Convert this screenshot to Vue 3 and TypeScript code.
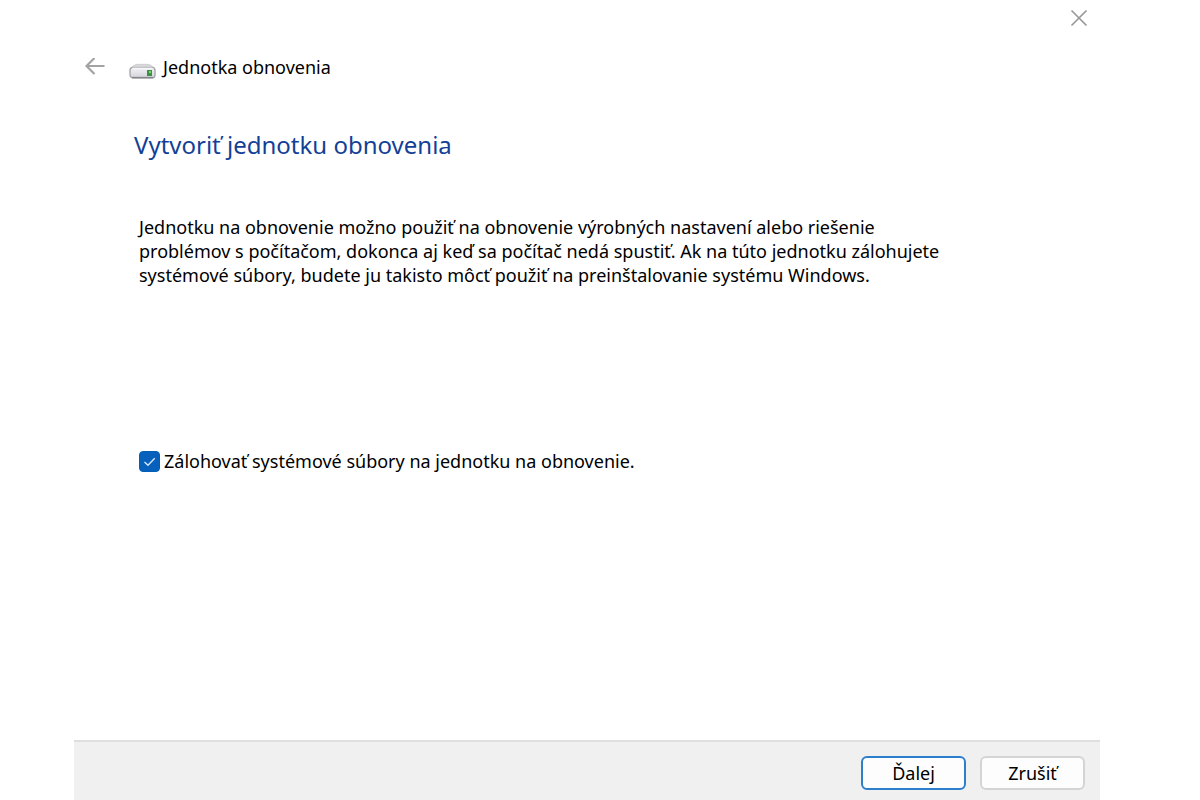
<script setup lang="ts">
import { ref } from 'vue'

const backupSystemFiles = ref<boolean>(true)

const paragraph: string[] = [
  'Jednotku na obnovenie možno použiť na obnovenie výrobných nastavení alebo riešenie',
  'problémov s počítačom, dokonca aj keď sa počítač nedá spustiť. Ak na túto jednotku zálohujete',
  'systémové súbory, budete ju takisto môcť použiť na preinštalovanie systému Windows.',
]
</script>

<template>
  <div class="wizard">
    <div class="titlebar">
      <button class="icon-button" type="button" aria-label="Zavrieť">
        <svg width="18" height="18" viewBox="0 0 18 18" fill="none" stroke="#999" stroke-width="1.7">
          <path d="M1.5 1.5 16.5 16.5M16.5 1.5 1.5 16.5" />
        </svg>
      </button>
    </div>

    <header class="header">
      <button class="icon-button" type="button" aria-label="Späť">
        <svg width="20" height="18" viewBox="0 0 20 18" fill="none" stroke="#a3a3a3" stroke-width="2.2">
          <path d="M19.5 8H1.5M9.5 0 1.5 8l8 8" />
        </svg>
      </button>
      <svg class="drive" width="27" height="16" viewBox="0 0 27 16" aria-hidden="true">
        <defs>
          <linearGradient id="drive-top" x1="0" y1="0" x2="0" y2="1">
            <stop offset="0" stop-color="#cfcfd2" />
            <stop offset="1" stop-color="#f3f3f5" />
          </linearGradient>
          <linearGradient id="drive-front" x1="0" y1="0" x2="0" y2="1">
            <stop offset="0" stop-color="#f4f4f7" />
            <stop offset="1" stop-color="#d2d2d9" />
          </linearGradient>
        </defs>
        <path d="M2 5.5Q4 1.8 8 1.3h11q4 .3 6 4.2z" fill="url(#drive-top)" stroke="#cdcdd0" stroke-width=".8" />
        <rect x="1" y="4.3" width="25" height="10.6" rx="3" fill="url(#drive-front)" stroke="#a2a2a7" stroke-width="1.3" />
        <path d="M3 14.6h21" stroke="#85858a" stroke-width="1.5" />
        <path d="M3.5 5.4h20" stroke="#f8f8fa" stroke-width="1.6" />
        <rect x="18" y="7" width="5" height="6" fill="#399342" />
        <rect x="20" y="8" width="2" height="2" fill="#80d46c" />
      </svg>
      <span class="app-name">Jednotka obnovenia</span>
    </header>

    <main class="content">
      <h1 class="title">Vytvoriť jednotku obnovenia</h1>
      <p class="description">
        <template v-for="(line, i) in paragraph" :key="i">{{ line }}<br v-if="i < paragraph.length - 1" /></template>
      </p>
      <label class="option">
        <span class="box">
          <input v-model="backupSystemFiles" class="check" type="checkbox" />
          <svg v-if="backupSystemFiles" class="tick" width="21" height="21" viewBox="0 0 21 21" fill="none" stroke="#d5e6f8" stroke-width="1.4">
            <path d="M5.5 11 9 14.3l6.7-7" />
          </svg>
        </span>
        <span>Zálohovať systémové súbory na jednotku na obnovenie.</span>
      </label>
    </main>

    <footer class="footer">
      <button class="button primary" type="button">Ďalej</button>
      <button class="button" type="button">Zrušiť</button>
    </footer>
  </div>
</template>

<style>
body {
  background: #fff;
}
</style>

<style scoped>
.wizard {
  box-sizing: border-box;
  display: flex;
  flex-direction: column;
  min-height: 100vh;
  margin: 0 100px 0 74px;
  background: #fff;
  color: #000;
  font-family: "Noto Sans", "Open Sans", sans-serif;
  font-size: 18px;
  line-height: 24px;
}

.titlebar {
  display: flex;
  justify-content: flex-end;
  padding: 9px 12px 0 0;
}

.icon-button {
  display: flex;
  padding: 0;
  border: 0;
  background: none;
}

.header {
  display: flex;
  align-items: center;
  margin-top: 28px;
  padding-left: 11px;
}

.drive {
  margin: 8px 7px 0 24px;
}

.content {
  flex: 1;
  padding: 0 60px;
}

.title {
  margin: 48px 0 0;
  color: #143f96;
  font-size: 24px;
  font-weight: 400;
  line-height: 36px;
}

.description {
  margin: 52px 0 0;
  padding-left: 5px;
}

.option {
  display: inline-flex;
  align-items: center;
  gap: 4px;
  margin-top: 162px;
  padding-left: 5px;
}

.box {
  display: grid;
}

.check {
  grid-area: 1 / 1;
  width: 21px;
  height: 21px;
  margin: 0;
  appearance: none;
  border: 1px solid #888;
  border-radius: 4px;
  background: #fff;
}

.check:checked {
  border-color: #005fb8;
  background: #0860bd;
}

.tick {
  grid-area: 1 / 1;
  pointer-events: none;
}

.footer {
  display: flex;
  justify-content: flex-end;
  gap: 14px;
  padding: 14px 15px 10px;
  border-top: 2px solid #dfdfdf;
  background: #f0f0f0;
}

.button {
  box-sizing: border-box;
  width: 105px;
  height: 34px;
  padding: 0;
  border: 2px solid #d4d4d4;
  border-radius: 6px;
  background: #fdfdfd;
  color: #000;
  font: inherit;
}

.button.primary {
  border-color: #2c7fca;
}
</style>
